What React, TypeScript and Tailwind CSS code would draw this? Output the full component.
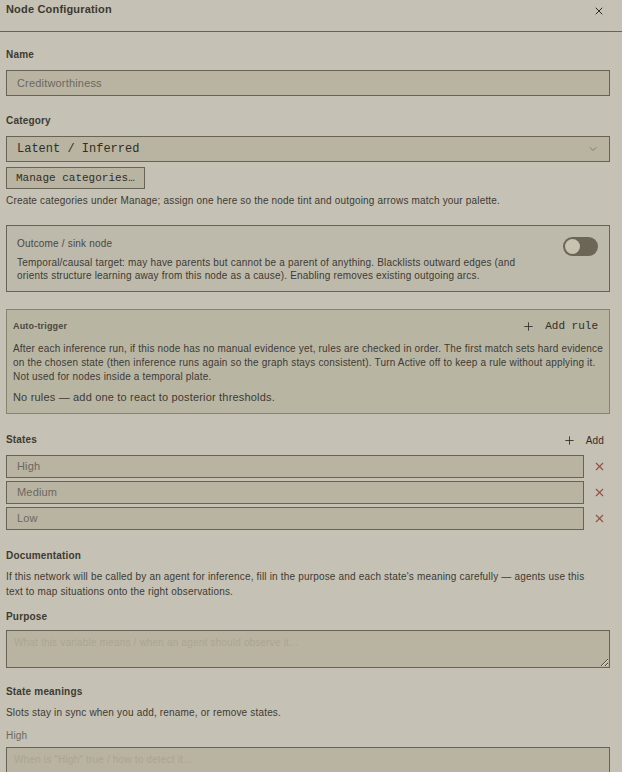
import { Plus, X, ChevronDown } from "lucide-react";

const font = "font-['Liberation_Sans',Arial,sans-serif]";
const mono = "font-['Liberation_Mono','DejaVu_Sans_Mono',monospace] tracking-normal";

function Label({ children, className = "" }: { children: React.ReactNode; className?: string }) {
  return <div className={`text-[10px] font-bold leading-[14px] text-[#3d3b33] ${className}`}>{children}</div>;
}

function StateRow({ value }: { value: string }) {
  return (
    <div className="flex items-center gap-[4px]">
      <div className="flex-1 h-[23px] border border-[#676355] bg-[#b9b3a1] pl-[10px] flex items-center text-[11px] text-[#6b695e]">
        {value}
      </div>
      <button type="button" className="w-[22px] flex justify-center">
        <X size={13} strokeWidth={2} color="#9e4b40" />
      </button>
    </div>
  );
}

export default function App() {
  return (
    <div className={`${font} tracking-[0.18px] w-[622px] h-[772px] overflow-hidden bg-[#c5c1b4] text-[#3d3b33]`}>
      <div className="h-[32px] border-b border-[#676355] flex items-start justify-between pl-[6px] pr-[17px] pt-[2px]">
        <div className="text-[11px] font-bold leading-[15px] text-[#3a3931]">Node Configuration</div>
        <X size={12} strokeWidth={2} className="mt-[3px] text-[#2d2c26]" />
      </div>

      <div className="px-[6px] pr-[12px]">
        <Label className="mt-[16px]">Name</Label>
        <div className="mt-[8px] h-[26px] border border-[#676355] bg-[#b9b3a1] pl-[10px] flex items-center text-[11px] text-[#6b695e]">
          Creditworthiness
        </div>

        <Label className="mt-[18px]">Category</Label>
        <div className={`mt-[8px] h-[26px] border border-[#676355] bg-[#b9b3a1] pl-[10px] pr-[10px] flex items-center justify-between ${mono} text-[12px] text-[#2f2e28]`}>
          <span>Latent / Inferred</span>
          <ChevronDown size={12} strokeWidth={1.5} className="text-[#6b695e]" />
        </div>
        <button type="button" className={`mt-[5px] h-[22px] px-[9px] border border-[#676355] bg-[#b9b3a1] ${mono} text-[11px] text-[#2f2e28]`}>
          Manage categories…
        </button>
        <p className="mt-[5px] text-[10px] leading-[14px]">
          Create categories under Manage; assign one here so the node tint and outgoing arrows match your palette.
        </p>

        <div className="mt-[17px] border border-[#676355] bg-[#bdb9ab] pl-[10px] pr-[11px] pt-[11px] pb-[9px] flex gap-4">
          <div className="flex-1">
            <div className="text-[10px] leading-[14px] text-[#4a483f]">Outcome / sink node</div>
            <p className="mt-[5px] text-[10px] leading-[13px] max-w-[515px]">
              Temporal/causal target: may have parents but cannot be a parent of anything. Blacklists outward edges (and orients structure learning away from this node as a cause). Enabling removes existing outgoing arcs.
            </p>
          </div>
          <div className="w-[35px] h-[19px] rounded-full bg-[#6b6656] p-[2px] flex items-center">
            <div className="w-[15px] h-[15px] rounded-full bg-[#c8c2b0]" />
          </div>
        </div>

        <div className="mt-[17px] border border-[#87836f] bg-[#b9b5a3] pl-[6px] pr-[4px] pt-[8px] pb-[8px]">
          <div className="flex items-center justify-between pr-[7px]">
            <div className="text-[9px] font-bold leading-[14px] text-[#4a483f]">Auto-trigger</div>
            <button type="button" className={`flex items-center gap-[10px] ${mono} text-[11px] text-[#2f2e28]`}>
              <Plus size={13} strokeWidth={1.6} />
              Add rule
            </button>
          </div>
          <p className="mt-[7px] text-[10px] leading-[14px]">
            After each inference run, if this node has no manual evidence yet, rules are checked in order. The first match sets hard evidence on the chosen state (then inference runs again so the graph stays consistent). Turn Active off to keep a rule without applying it. Not used for nodes inside a temporal plate.
          </p>
          <p className="mt-[5px] text-[11px] leading-[16px] text-[#3d3b33]">
            No rules — add one to react to posterior thresholds.
          </p>
        </div>

        <div className="mt-[19px] flex items-center justify-between">
          <Label>States</Label>
          <button type="button" className="flex items-center gap-[10px] text-[10px] text-[#2f2e28] pr-[6px]">
            <Plus size={13} strokeWidth={1.6} />
            Add
          </button>
        </div>
        <div className="mt-[7px] flex flex-col gap-[3px]">
          <StateRow value="High" />
          <StateRow value="Medium" />
          <StateRow value="Low" />
        </div>

        <Label className="mt-[19px]">Documentation</Label>
        <p className="mt-[6px] text-[10px] leading-[15px] max-w-[596px]">
          If this network will be called by an agent for inference, fill in the purpose and each state's meaning carefully — agents use this text to map situations onto the right observations.
        </p>

        <Label className="mt-[11px]">Purpose</Label>
        <textarea
          className="mt-[6px] block w-full h-[38px] border border-[#676355] bg-[#b9b3a1] px-[7px] py-[5px] text-[10px] leading-[14px] text-[#3d3b33] placeholder:text-[#aaa593] outline-none"
          placeholder="What this variable means / when an agent should observe it…"
        />

        <Label className="mt-[17px]">State meanings</Label>
        <p className="mt-[7px] text-[10px] leading-[14px]">Slots stay in sync when you add, rename, or remove states.</p>
        <div className="mt-[9px] text-[10px] leading-[14px] text-[#6b695e]">High</div>
        <textarea
          className="mt-[4px] block w-full h-[38px] border border-[#676355] bg-[#b9b3a1] px-[7px] py-[5px] text-[10px] leading-[14px] placeholder:text-[#aaa593] outline-none"
          placeholder={'When is "High" true / how to detect it…'}
        />
      </div>
    </div>
  );
}
